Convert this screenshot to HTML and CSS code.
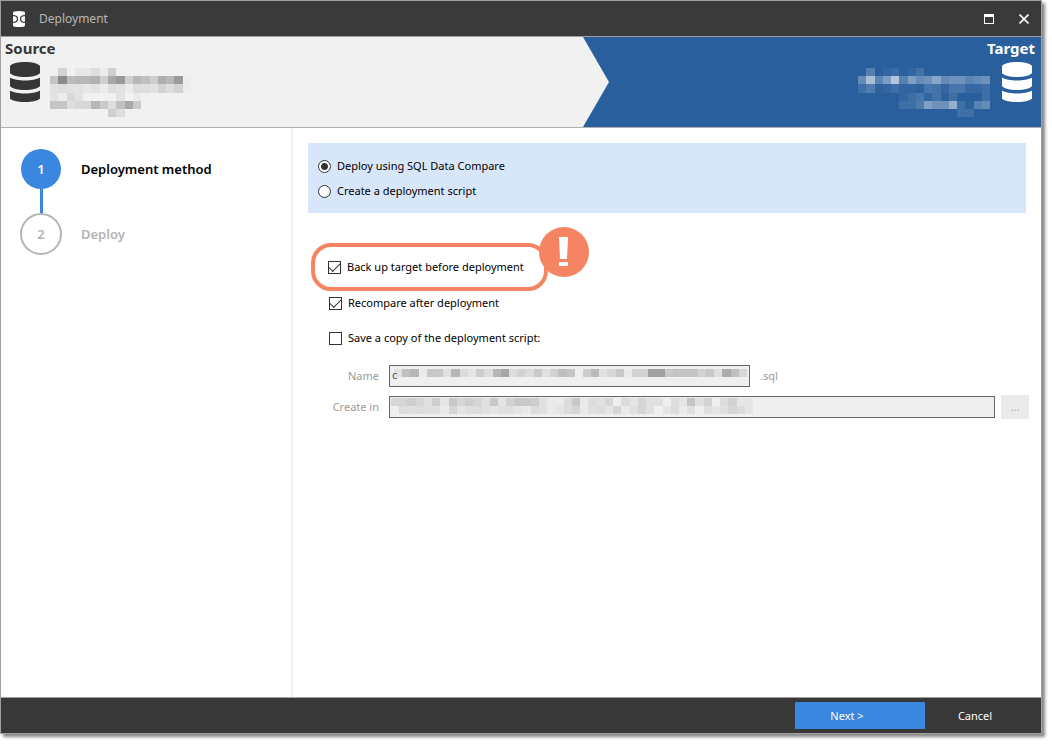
FILE: index.html
```
<!DOCTYPE html>
<html lang="en">
<head>
<meta charset="utf-8">
<title>Deployment</title>
<link rel="stylesheet" href="styles.css">
</head>
<body>
<main class="window">
  <header class="titlebar">
    <svg class="logo" viewBox="0 0 12 16" aria-hidden="true">
      <path fill="#fff" d="M0 1.500Q0 0 6 0T12 1.500V14.500Q12 16 6 16T0 14.500Z"/>
      <path fill="none" stroke="#3a3a3a" stroke-width="1.300" d="M0 4.700H1Q4.500 5 4.500 8T1 11.300H0M12 4.700H11Q7.500 5 7.500 8T11 11.300H12"/>
    </svg>
    <h1 class="title">Deployment</h1>
    <button class="win-button" aria-label="Maximize">
      <svg width="10" height="10" viewBox="0 0 10 10"><path fill="#fff" fill-rule="evenodd" d="M0 0H10V10H0ZM1 3V9H9V3Z"/></svg>
    </button>
    <button class="win-button" aria-label="Close">
      <svg width="10" height="10" viewBox="0 0 10 10"><path stroke="#fff" stroke-width="1.600" d="M.5.5L9.500 9.500M9.500.5L.5 9.500"/></svg>
    </button>
  </header>

  <section class="banner">
    <div class="source">
      <h2 class="side-title">Source</h2>
      <div class="side-row">
        <svg class="database" viewBox="0 0 30 40" aria-hidden="true"><path fill="currentColor" d="M0 4C4-1.300 26-1.300 30 4V11C26 16.300 4 16.300 0 11ZM0 15.500C6 19.500 24 19.500 30 15.500V24C26 29.300 4 29.300 0 24ZM0 28.500C6 32.500 24 32.500 30 28.500V36.500C26 41.300 4 41.300 0 36.500Z"/></svg>
        <svg class="mosaic mosaic-source" data-rows="06022417 9lbccd7fi7ca7eci1 34332314314436461 31530000301 99455c84af8 000000074"></svg>
      </div>
    </div>
    <div class="target">
      <h2 class="side-title">Target</h2>
      <div class="side-row">
        <svg class="mosaic mosaic-target" data-rows="0a024026 eucjwbkegmeggceg 5912522176277335 0000025726150005 00000559kggp51be 0000000000005500"></svg>
        <svg class="database" viewBox="0 0 30 40" aria-hidden="true"><path fill="currentColor" d="M0 4C4-1.300 26-1.300 30 4V11C26 16.300 4 16.300 0 11ZM0 15.500C6 19.500 24 19.500 30 15.500V24C26 29.300 4 29.300 0 24ZM0 28.500C6 32.500 24 32.500 30 28.500V36.500C26 41.300 4 41.300 0 36.500Z"/></svg>
      </div>
    </div>
  </section>

  <div class="body">
    <nav class="sidebar">
      <ol class="steps">
        <li class="step current"><span class="number">1</span><span>Deployment method</span></li>
        <li class="connector" aria-hidden="true"></li>
        <li class="step"><span class="number">2</span><span>Deploy</span></li>
      </ol>
    </nav>

    <form class="content">
      <div class="method">
        <label class="choice"><input class="radio" type="radio" name="method" checked>Deploy using SQL Data Compare</label>
        <label class="choice"><input class="radio" type="radio" name="method">Create a deployment script</label>
      </div>

      <div class="highlight">
        <label class="choice"><input class="check" type="checkbox" checked>Back up target before deployment</label>
        <svg class="alert" viewBox="0 0 50 50" aria-hidden="true">
          <circle cx="25" cy="25" r="25" fill="#f58562"/>
          <path fill="#fff" d="M20 10H29L28 32H21ZM20 35H29V39H20Z"/>
        </svg>
      </div>
      <div class="options">
        <label class="choice"><input class="check" type="checkbox" checked>Recompare after deployment</label>
        <label class="choice"><input class="check" type="checkbox">Save a copy of the deployment script:</label>
      </div>

      <div class="fields">
        <label for="name">Name</label>
        <div class="field-row">
          <div class="field field-name">
            <input class="text" id="name" type="text" value="c" disabled>
            <svg class="mosaic mosaic-name" data-rows="3ac1883c4274cf464836a907b358166gg8999683ea5"></svg>
          </div>
          <span>.sql</span>
        </div>
        <label for="folder">Create in</label>
        <div class="field-row folder-row">
          <div class="field field-folder">
            <input class="text" id="folder" type="text" disabled>
            <svg class="mosaic mosaic-folder" data-rows="55753728575382688731148143504253304293604622 04343315234323321431245134251353024130323542"></svg>
          </div>
          <button class="browse" type="button" disabled>...</button>
        </div>
      </div>
    </form>
  </div>

  <footer class="footer">
    <button class="action primary">Next &gt;</button>
    <button class="action cancel">Cancel</button>
  </footer>
</main>
<script src="mosaic.js"></script>
</body>
</html>
```
FILE: styles.css
```
* { box-sizing: border-box; }

body {
  margin: 0;
  height: 100vh;
  padding: 0 10px 10px 0;
  display: flex;
  background: #fff;
  color: #000;
  font: 11px/16px "Noto Sans", "Open Sans", sans-serif;
}

h1, h2, ol { margin: 0; padding: 0; }
button { font: inherit; border: 0; padding: 0; }
svg { display: block; }

.window {
  flex: 1;
  display: flex;
  flex-direction: column;
  border: 1px solid #a0a0a0;
  background: #fff;
  box-shadow: 3px 3px 3px #888;
}

.titlebar {
  height: 36px;
  display: flex;
  align-items: center;
  padding: 0 6px 0 12px;
  background: #3a3a3a;
  border-bottom: 1px solid #a0a0a0;
}
.logo { width: 12px; height: 16px; }
.title {
  flex: 1;
  margin-left: 14px;
  color: #b8b8b8;
  font-size: 12px;
  font-weight: 400;
}
.win-button {
  width: 36px;
  height: 30px;
  display: grid;
  place-items: center;
  background: none;
}
.win-button:last-child { width: 22px; margin-left: 6px; }

.banner {
  height: 91px;
  display: flex;
  background: #2a5f9e;
  border-bottom: 1px solid #b0b0b0;
}
.source {
  width: 608px;
  padding: 2px 4px;
  background: #f1f1f1;
  color: #363636;
  clip-path: polygon(0 0, 582px 0, 100% 50%, 582px 100%, 0 100%);
}
.target {
  flex: 1;
  padding: 2px 6px;
  color: #fff;
  text-align: right;
}
.side-title { font-size: 15px; line-height: 18px; }
.side-row { display: flex; gap: 10px; padding: 5px 5px 0; }
.target .side-row { justify-content: flex-end; gap: 12px; padding-right: 3px; }
.database { width: 30px; height: 40px; }
.mosaic-source { width: 141px; height: 49px; margin-top: 6px; }
.mosaic-target { width: 132px; height: 49px; margin-top: 6px; }

.body { flex: 1; display: flex; }
.sidebar {
  width: 292px;
  padding: 21px 19px;
  border-right: 2px solid #f0f0f0;
}
.steps { list-style: none; }
.step {
  display: flex;
  align-items: center;
  gap: 19px;
  color: #b4b4b4;
  font-size: 13px;
  font-weight: 600;
}
.number {
  width: 42px;
  height: 42px;
  display: grid;
  place-items: center;
  border: 2px solid #b4b4b4;
  border-radius: 50%;
}
.current { color: #000; }
.current .number {
  width: 40px;
  height: 40px;
  margin: 0 1px;
  border: 0;
  background: #3b86df;
  color: #fff;
}
.connector {
  width: 3px;
  height: 24px;
  margin-left: 20px;
  background: #3b86df;
}

.content { flex: 1; padding: 15px 12px 15px 15px; }
.method {
  display: flex;
  flex-direction: column;
  gap: 9px;
  margin-right: 3px;
  padding: 15px 10px 14px;
  background: #d8e6f9;
}
.choice { display: flex; align-items: center; gap: 6px; }
.radio, .check {
  appearance: none;
  width: 13px;
  height: 13px;
  margin: 0;
  border: 1px solid #333;
  background: #fff;
}
.radio { border-radius: 50%; }
.radio:checked { background: radial-gradient(circle, #333 3px, #fff 4px); }
.check { display: grid; place-items: center; }
.check:checked::before {
  content: "";
  width: 10px;
  height: 5px;
  margin-bottom: 3px;
  border: solid #333;
  border-width: 0 0 1px 1px;
  transform: rotate(-45deg);
}

.highlight {
  position: relative;
  width: 237px;
  height: 48px;
  margin: 30px 0 0 3px;
  padding: 12px 13px;
  border: 4px solid #f58562;
  border-radius: 20px;
}
.alert {
  position: absolute;
  top: -20px;
  right: -45px;
  width: 50px;
  height: 50px;
}
.options {
  display: flex;
  flex-direction: column;
  gap: 19px;
  margin: 4px 0 0 21px;
}

.fields {
  display: grid;
  grid-template-columns: 71px 1fr;
  align-items: center;
  gap: 8px 10px;
  margin-top: 19px;
  color: #9a9a9a;
}
.fields label { text-align: right; }
.field-row { display: flex; align-items: center; gap: 10px; }
.folder-row { gap: 6px; }
.field { display: grid; align-items: start; }
.field > * { grid-area: 1 / 1; }
.field-name { flex: 0 1 361px; }
.field-folder { flex: 1; }
.text {
  width: 100%;
  height: 22px;
  padding: 0 2px 4px;
  border: 1px solid #666;
  background: #efefef;
  color: #555;
  font: inherit;
}
.mosaic-name { width: 353px; height: 8px; margin: 4px 0 0 5px; }
.mosaic-folder { width: 362px; height: 16px; margin: 2px 0 0 2px; }
.browse { width: 28px; height: 24px; background: #eaeaea; color: #a8a8a8; }

.footer {
  height: 36px;
  display: flex;
  padding: 4px 1px 4px 0;
  justify-content: flex-end;
  background: #383838;
  border-top: 1px solid #a0a0a0;
}
.action { width: 115px; background: none; color: #fff; }
.primary { width: 130px; padding-right: 26px; background: #3b86df; }
.cancel { padding-right: 15px; }
```
FILE: mosaic.js
```
// Fills each mosaic with square cells; every base-36 digit is a step of 2% opacity.
document.querySelectorAll(".mosaic").forEach((svg) => {
  const rows = svg.dataset.rows.split(" ");
  const columns = Math.max(...rows.map((row) => row.length));
  const colour = svg.closest(".target") ? "#fff" : "#000";
  svg.setAttribute("viewBox", `0 0 ${columns} ${rows.length}`);
  svg.setAttribute("preserveAspectRatio", "none");
  svg.setAttribute("shape-rendering", "crispEdges");
  svg.innerHTML = rows.map((row, y) => [...row].map((digit, x) =>
    `<rect x="${x}" y="${y}" width="1" height="1" fill="${colour}" opacity="${parseInt(digit, 36) / 50}"/>`
  ).join("")).join("");
});
```
